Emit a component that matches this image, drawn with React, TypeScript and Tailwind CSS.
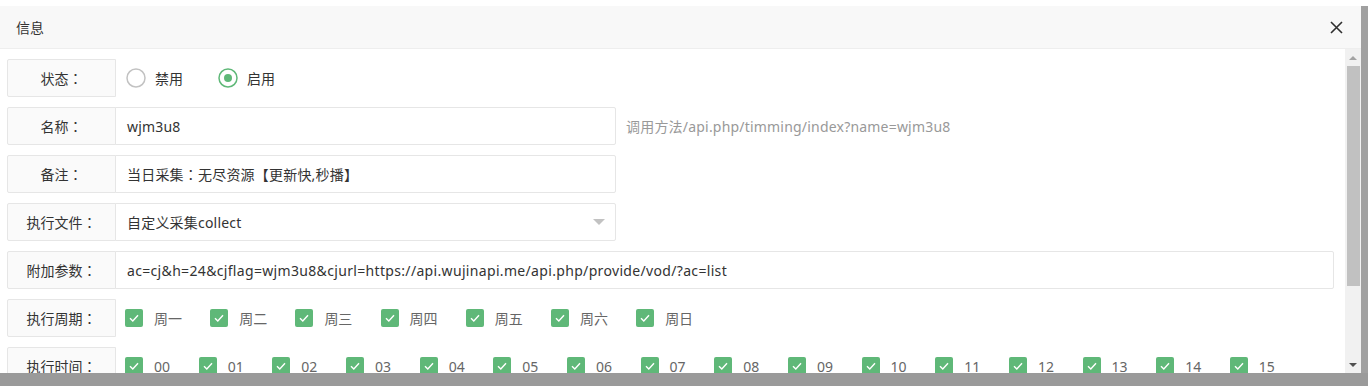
import React from "react";

const FONT = "font-['Noto_Sans','Noto_Sans_CJK_SC',sans-serif]";

const weekdays = ["周一", "周二", "周三", "周四", "周五", "周六", "周日"];
const hours = Array.from({ length: 24 }, (_, i) => String(i).padStart(2, "0"));

// full-width colon, centred like YaHei draws it
function Colon() {
  return <span className="font-['Noto_Sans_CJK_TC',sans-serif]">：</span>;
}

function Label({ children }: { children: React.ReactNode }) {
  return (
    <div className="flex h-[38px] w-[109px] shrink-0 items-center justify-center rounded-l-[2px] border border-[#e6e6e6] bg-[#fafafa] text-[14px] text-[#333]">
      <span>
        {children}
        <Colon />
      </span>
    </div>
  );
}

function Row({ label, children }: { label: string; children: React.ReactNode }) {
  return (
    <div className="flex h-[38px] items-center">
      <Label>{label}</Label>
      {children}
    </div>
  );
}

function Input({ children, wide, select }: { children: React.ReactNode; wide?: boolean; select?: boolean }) {
  return (
    <div
      className={`-ml-px flex h-[38px] items-center rounded-r-[2px] border border-[#e6e6e6] bg-white pl-[11px] pr-[10px] text-[14px] text-[#333] ${
        wide ? "flex-1" : "w-[501px]"
      }`}
    >
      <span className={`flex-1 whitespace-nowrap ${wide ? "tracking-[0.33px]" : "tracking-[0.2px]"}`}>{children}</span>
      {select && (
        <svg width="12" height="6" viewBox="0 0 12 6">
          <path d="M0 0h12L6 6z" fill="#c2c2c2" />
        </svg>
      )}
    </div>
  );
}

function Radio({ label, checked }: { label: string; checked?: boolean }) {
  return (
    <div className="flex items-center">
      <svg width="20" height="20" viewBox="0 0 20 20">
        <circle cx="10" cy="10" r="9" fill="none" stroke={checked ? "#5FB878" : "#c2c2c2"} strokeWidth="1.5" />
        {checked && <circle cx="10" cy="10" r="4" fill="#5FB878" />}
      </svg>
      <span className="ml-[9px] text-[14px] text-[#333]">{label}</span>
    </div>
  );
}

function Check({ label, width }: { label: string; width: string }) {
  return (
    <div className={`flex h-[18px] shrink-0 items-center ${width}`}>
      <div className="flex h-[18px] w-[18px] items-center justify-center rounded-[2px] bg-[#5FB878]">
        <svg width="12" height="12" viewBox="0 0 12 12">
          <polyline points="2,6.2 4.8,9 10,3.2" fill="none" stroke="white" strokeWidth="1.4" />
        </svg>
      </div>
      <span className="ml-[11px] text-[14px] text-[#666]">{label}</span>
    </div>
  );
}

export default function App() {
  return (
    <div className={`flex h-[386px] w-[1368px] flex-col overflow-hidden bg-white ${FONT}`}>
      <div className="h-[6px] shrink-0" />
      <div className="flex min-h-0 flex-1">
        <div className="flex w-[1361px] flex-col">
          <div className="flex h-[43px] shrink-0 items-center justify-between border-b border-[#eee] bg-[#f8f8f8] pl-[16px] pr-[18px]">
            <span className="text-[14px] text-[#333]">信息</span>
            <svg width="13" height="13" viewBox="0 0 13 13">
              <path d="M1 1l11 11M12 1L1 12" stroke="#2f2f2f" strokeWidth="1.6" />
            </svg>
          </div>
          <div className="flex min-h-0 flex-1">
            <div className="flex flex-1 flex-col gap-[10px] overflow-hidden pl-[7px] pr-[11px] pt-[10px]">
              <Row label="状态">
                <div className="ml-[10px] flex items-center gap-[35px]">
                  <Radio label="禁用" />
                  <Radio label="启用" checked />
                </div>
              </Row>
              <Row label="名称">
                <Input>wjm3u8</Input>
                <span className="ml-[10px] text-[14px] tracking-[0.2px] text-[#999]">
                  调用方法/api.php/timming/index?name=wjm3u8
                </span>
              </Row>
              <Row label="备注">
                <Input>
                  当日采集<Colon />无尽资源【更新快,秒播】
                </Input>
              </Row>
              <Row label="执行文件">
                <Input select>自定义采集collect</Input>
              </Row>
              <Row label="附加参数">
                <Input wide>ac=cj&h=24&cjflag=wjm3u8&cjurl=https://api.wujinapi.me/api.php/provide/vod/?ac=list</Input>
              </Row>
              <Row label="执行周期">
                <div className="ml-[9px] flex">
                  {weekdays.map((d) => (
                    <Check key={d} label={d} width="w-[85.2px]" />
                  ))}
                </div>
              </Row>
              <div className="flex items-start">
                <Label>执行时间</Label>
                <div className="ml-[9px] mt-[10px] flex flex-wrap gap-y-[20px]">
                  {hours.map((h) => (
                    <Check key={h} label={h} width="w-[73.67px]" />
                  ))}
                </div>
              </div>
            </div>
            <div className="flex w-[16px] shrink-0 flex-col items-center bg-[#f1f1f1]">
              <div className="flex h-[17px] items-center justify-center">
                <svg width="8" height="4" viewBox="0 0 8 4">
                  <path d="M0 4h8L4 0z" fill="#a3a3a3" />
                </svg>
              </div>
              <div className="h-[220px] w-[13px] bg-[#c1c1c1]" />
              <div className="flex-1" />
              <div className="flex h-[17px] items-center justify-center">
                <svg width="8" height="4" viewBox="0 0 8 4">
                  <path d="M0 0h8L4 4z" fill="#505050" />
                </svg>
              </div>
            </div>
          </div>
        </div>
        <div className="w-[7px] shrink-0 bg-[#a0a0a0]" />
      </div>
      <div className="h-[13px] shrink-0 bg-[#9a9a9a]" />
    </div>
  );
}
